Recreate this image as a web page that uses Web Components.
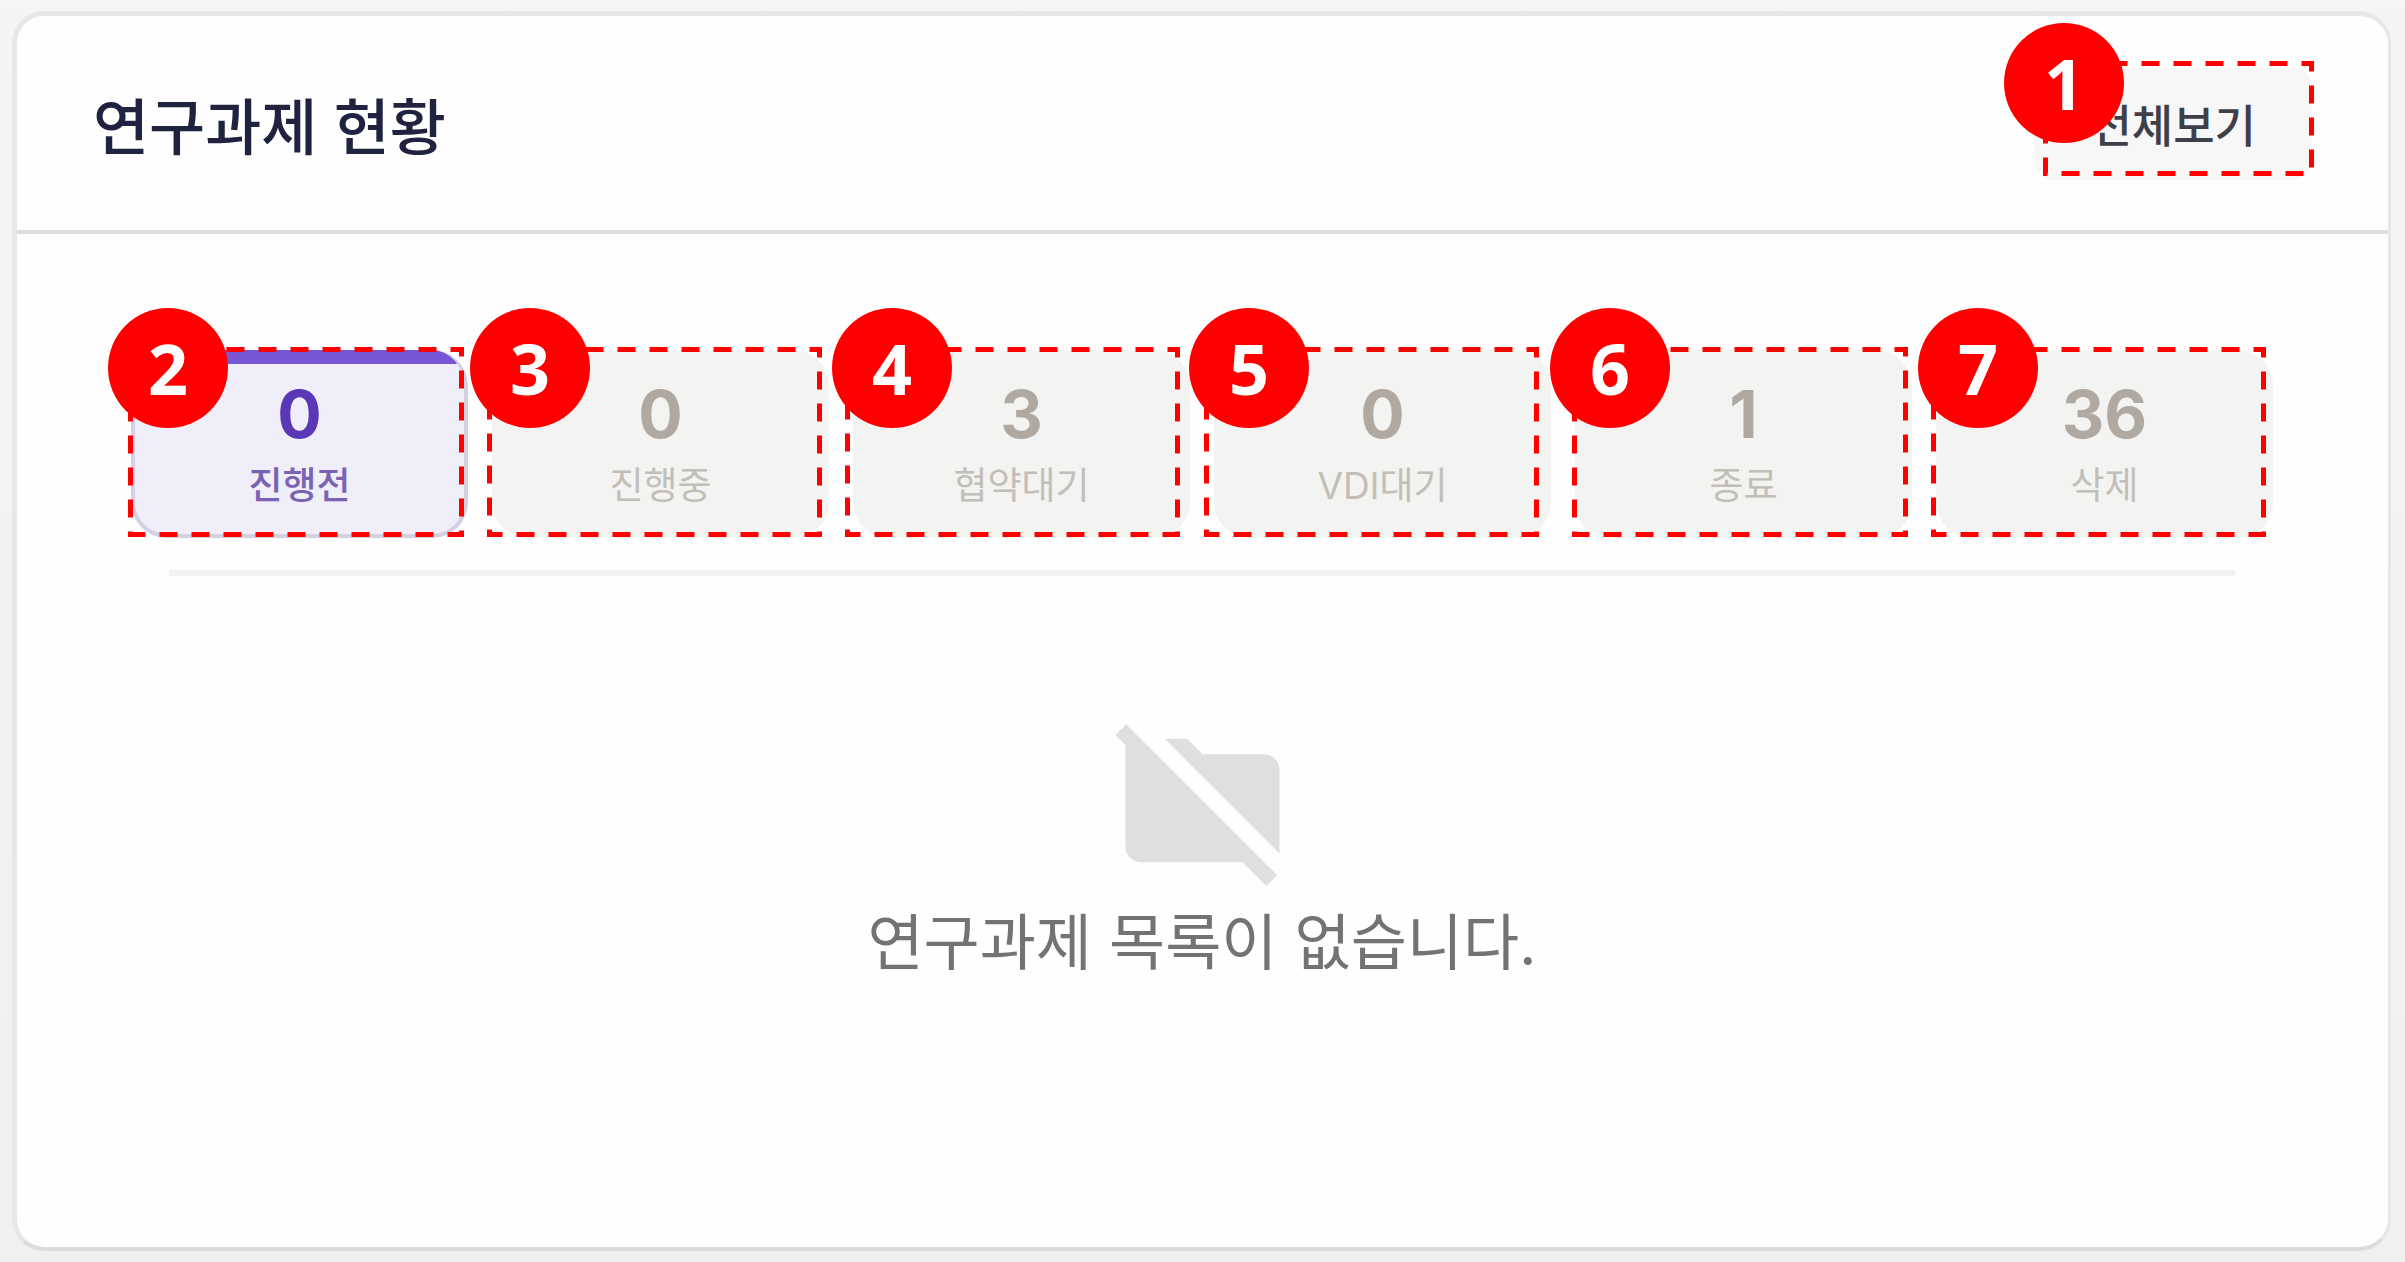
<!DOCTYPE html>
<html lang="ko">
<head>
<meta charset="utf-8">
<title>연구과제 현황</title>
<style>
body {
  margin: 0;
  background: #f4f4f4;
  font-family: Inter, "Noto Sans CJK KR", sans-serif;
}
</style>
</head>
<body>
<guide-canvas>
  <status-card heading="연구과제 현황" action="전체보기">
    <status-tabs slot="tabs">
      <status-tab count="0" active>진행전</status-tab>
      <status-tab count="0">진행중</status-tab>
      <status-tab count="3">협약대기</status-tab>
      <status-tab count="0">VDI대기</status-tab>
      <status-tab count="1">종료</status-tab>
      <status-tab count="36">삭제</status-tab>
    </status-tabs>
    <empty-list>연구과제 목록이 없습니다.</empty-list>
  </status-card>

  <callout-frame slot="marks" x="2043" y="61" w="271" h="115"></callout-frame>
  <callout-frame slot="marks" x="128" y="347" w="336" h="190"></callout-frame>
  <callout-frame slot="marks" x="487" y="347" w="335" h="190"></callout-frame>
  <callout-frame slot="marks" x="845" y="347" w="335" h="190"></callout-frame>
  <callout-frame slot="marks" x="1204" y="347" w="335" h="190"></callout-frame>
  <callout-frame slot="marks" x="1572" y="347" w="336" h="190"></callout-frame>
  <callout-frame slot="marks" x="1931" y="347" w="335" h="190"></callout-frame>

  <callout-badge slot="marks" x="2004" y="23">1</callout-badge>
  <callout-badge slot="marks" x="108" y="308">2</callout-badge>
  <callout-badge slot="marks" x="470" y="308">3</callout-badge>
  <callout-badge slot="marks" x="832" y="308">4</callout-badge>
  <callout-badge slot="marks" x="1189" y="308">5</callout-badge>
  <callout-badge slot="marks" x="1550" y="308">6</callout-badge>
  <callout-badge slot="marks" x="1918" y="308">7</callout-badge>
</guide-canvas>

<script>
// width the callout coordinates are given for
const CANVAS_WIDTH = 2405;

const toPercent = value => `${(value / CANVAS_WIDTH) * 100}%`;

class GuideCanvas extends HTMLElement {
  constructor() {
    super();
    this.attachShadow({ mode: 'open' });
    this.shadowRoot.innerHTML = `
<style>
:host {
  position: relative;
  display: flex;
  flex-direction: column;
  box-sizing: border-box;
  min-height: 100vh;
  padding: 11px 14px 11px 12px;
  background: linear-gradient(#f5f5f5, #f0f0f0);
}
</style>
<slot></slot>
<slot name="marks"></slot>
`;
  }
}

class StatusCard extends HTMLElement {
  constructor() {
    super();
    this.attachShadow({ mode: 'open' });
    this.shadowRoot.innerHTML = `
<style>
:host {
  display: flex;
  flex: 1;
  flex-direction: column;
  border: solid #e7e7e7;
  border-width: 5px 3px 4px 5px;
  border-bottom-color: #dcdcdc;
  border-radius: 32px;
  background: #fefefe;
}

header {
  display: flex;
  justify-content: space-between;
  align-items: center;
  padding: 52px 76px 50px;
  border-bottom: 4px solid #dedede;
}

h2 {
  margin: 0;
  padding-top: 8px;
  font-size: 61px;
  line-height: 80px;
  font-weight: 500;
  color: #1f2340;
}

button {
  padding: 27px 56px 21px;
  border: 0;
  border-radius: 20px;
  background: #f7f7f7;
  font: 500 45px/64px Inter, "Noto Sans CJK KR", sans-serif;
  color: #3f3f4a;
}

.body {
  flex: 1;
  padding: 116px 115px 0 114px;
}
</style>
<header>
  <h2></h2>
  <button type="button"></button>
</header>
<div class="body">
  <slot name="tabs"></slot>
  <slot></slot>
</div>
`;
  }

  connectedCallback() {
    this.shadowRoot.querySelector('h2').textContent = this.getAttribute('heading');
    this.shadowRoot.querySelector('button').textContent = this.getAttribute('action');
  }
}

class StatusTabs extends HTMLElement {
  constructor() {
    super();
    this.attachShadow({ mode: 'open' });
    this.shadowRoot.innerHTML = `
<style>
:host {
  display: block;
}

.tabs {
  display: grid;
  grid-template-columns: repeat(6, 1fr);
  gap: 24px;
}

.line {
  height: 6px;
  margin: 32px 38px 0;
  background: #f2f2f2;
}
</style>
<div class="tabs"><slot></slot></div>
<div class="line"></div>
`;
  }
}

class StatusTab extends HTMLElement {
  constructor() {
    super();
    this.attachShadow({ mode: 'open' });
    this.shadowRoot.innerHTML = `
<style>
:host {
  display: block;
}

button {
  position: relative;
  display: flex;
  flex-direction: column;
  align-items: center;
  gap: 12px;
  box-sizing: border-box;
  width: 100%;
  padding: 24px 16px;
  overflow: hidden;
  border: 4px solid transparent;
  border-radius: 36px;
  background: #f3f3f1 border-box;
  font: inherit;
  color: #c2beb8;
}

.count {
  font-size: 66px;
  line-height: 72px;
  font-weight: 700;
  color: #b0a9a1;
}

.label {
  font-size: 37px;
  line-height: 48px;
}

:host([active]) button {
  border-color: #d3cfe4;
  border-top: 0;
  padding-top: 28px;
  background: #f0eef9;
  color: #7a62b4;
}

:host([active]) button::before {
  content: "";
  position: absolute;
  inset: 0 0 auto;
  height: 14px;
  background: #7856d6;
}

:host([active]) .count {
  color: #5a37b5;
}

:host([active]) .label {
  font-weight: 500;
}
</style>
<button type="button">
  <span class="count"></span>
  <span class="label"><slot></slot></span>
</button>
`;
  }

  connectedCallback() {
    this.shadowRoot.querySelector('.count').textContent = this.getAttribute('count');
    this.shadowRoot.querySelector('button').setAttribute('aria-pressed', this.hasAttribute('active'));
  }
}

class EmptyList extends HTMLElement {
  constructor() {
    super();
    this.attachShadow({ mode: 'open' });
    this.shadowRoot.innerHTML = `
<style>
:host {
  display: flex;
  flex-direction: column;
  align-items: center;
  padding: 132px 0 80px;
}

svg {
  width: 185px;
  height: 185px;
  fill: #dfdfdf;
}

p {
  margin: 10px 0 0;
  font-size: 61px;
  line-height: 80px;
  color: #737373;
}
</style>
<svg viewBox="0 0 24 24" aria-hidden="true">
  <path d="M7.1 4H10l2 2h8c1.1 0 2 .9 2 2v10.9z"/>
  <path d="M2.1 2.1.7 3.5 2 4.8V18c0 1.1.9 2 2 2h13.2l3.1 3.1 1.4-1.4z"/>
</svg>
<p><slot></slot></p>
`;
  }
}

class CalloutFrame extends HTMLElement {
  constructor() {
    super();
    this.attachShadow({ mode: 'open' });
    this.shadowRoot.innerHTML = `
<style>
:host {
  position: absolute;
  pointer-events: none;
}

svg {
  display: block;
  width: 100%;
  height: 100%;
}

/* inset by half the stroke */
rect {
  x: 2.5px;
  y: 2.5px;
  width: calc(100% - 5px);
  height: calc(100% - 5px);
  fill: none;
  stroke: #f00;
  stroke-width: 5px;
  stroke-dasharray: 18 14;
}
</style>
<svg aria-hidden="true"><rect></rect></svg>
`;
  }

  connectedCallback() {
    this.style.left = toPercent(this.getAttribute('x'));
    this.style.top = `${this.getAttribute('y')}px`;
    this.style.width = toPercent(this.getAttribute('w'));
    this.style.height = `${this.getAttribute('h')}px`;
  }
}

class CalloutBadge extends HTMLElement {
  constructor() {
    super();
    this.attachShadow({ mode: 'open' });
    this.shadowRoot.innerHTML = `
<style>
:host {
  position: absolute;
  display: flex;
  justify-content: center;
  align-items: center;
  width: 120px;
  height: 120px;
  border-radius: 50%;
  background: #f00;
  font: 700 70px/96px "Open Sans", "Noto Sans", sans-serif;
  color: #fff;
  pointer-events: none;
}
</style>
<slot></slot>
`;
  }

  connectedCallback() {
    this.style.left = toPercent(this.getAttribute('x'));
    this.style.top = `${this.getAttribute('y')}px`;
  }
}

customElements.define('guide-canvas', GuideCanvas);
customElements.define('status-card', StatusCard);
customElements.define('status-tabs', StatusTabs);
customElements.define('status-tab', StatusTab);
customElements.define('empty-list', EmptyList);
customElements.define('callout-frame', CalloutFrame);
customElements.define('callout-badge', CalloutBadge);
</script>
</body>
</html>
